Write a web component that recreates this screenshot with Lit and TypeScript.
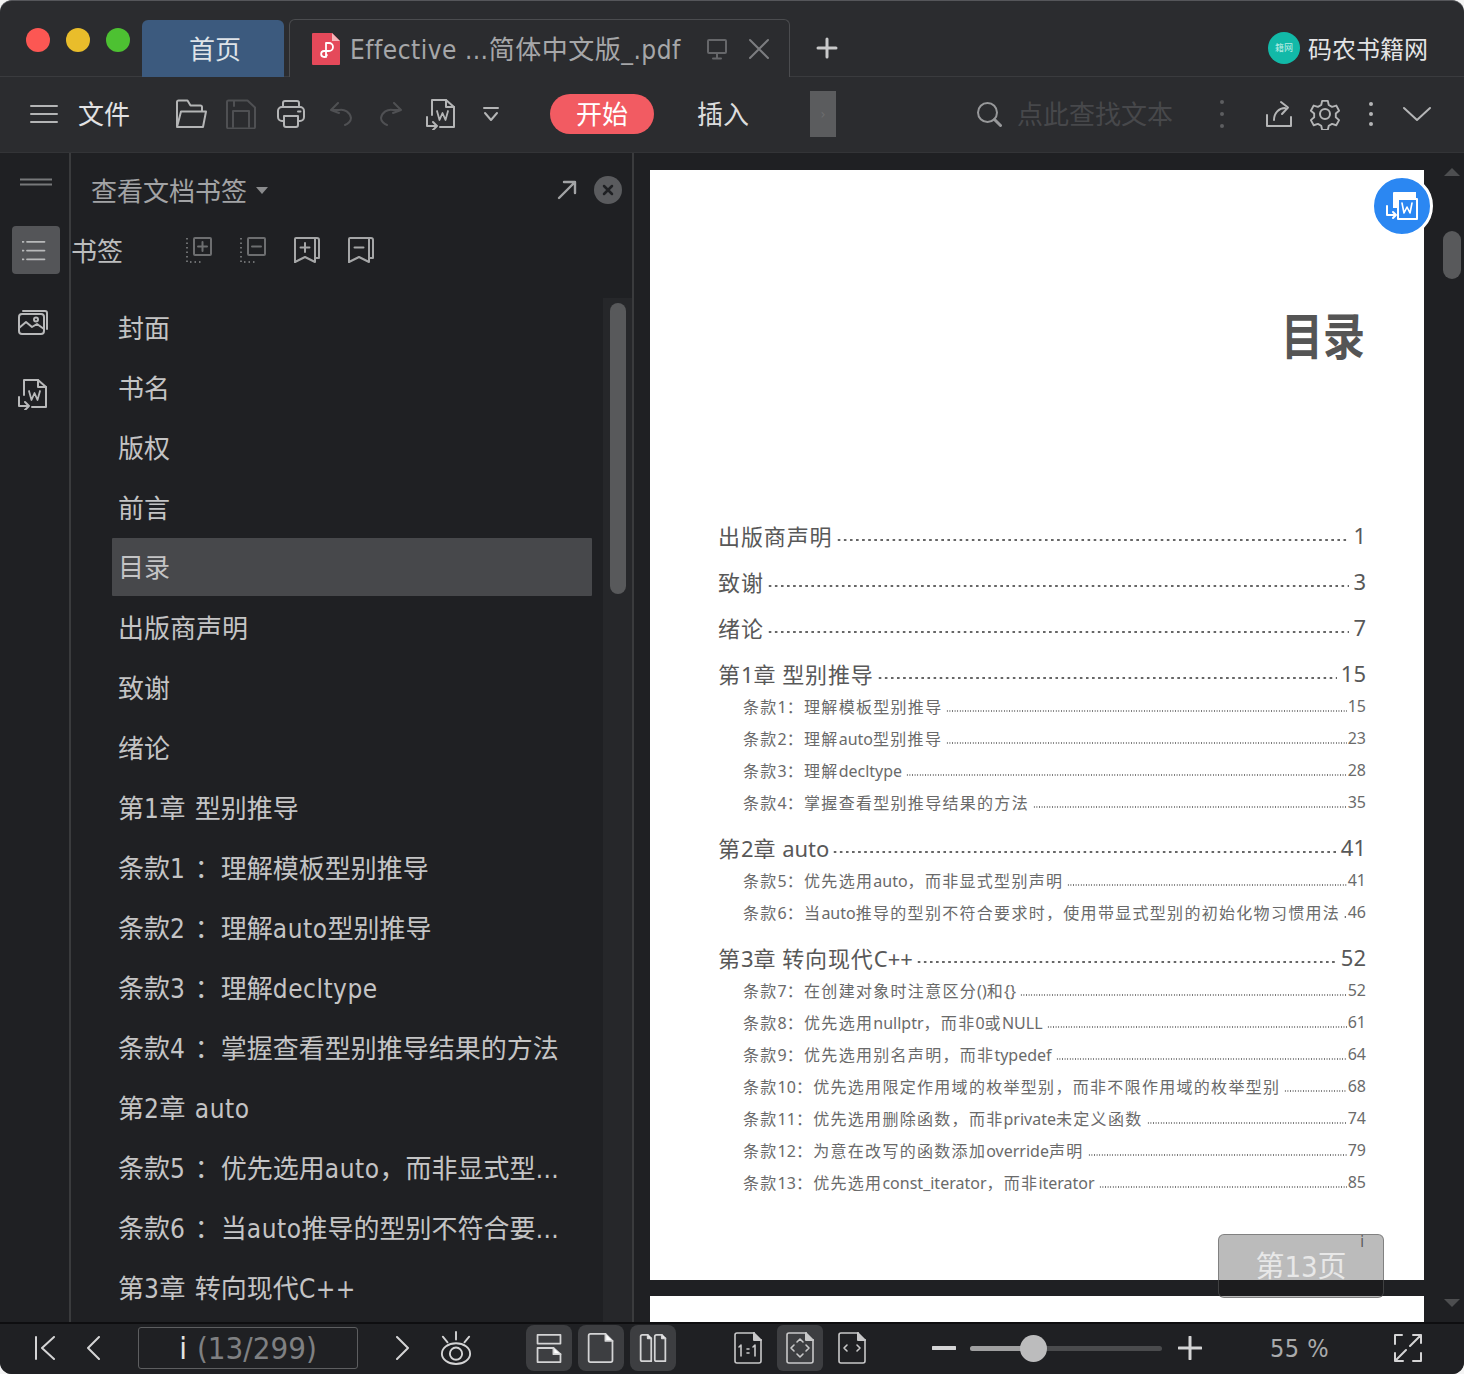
import { LitElement, html, css, svg } from "lit";
import { customElement } from "lit/decorators.js";

const ic = (w: number, h: number, vb: string, body: unknown, cls = "") =>
  html`<svg class=${cls} width=${w} height=${h} viewBox=${vb} fill="none" stroke="currentColor" stroke-width="2" stroke-linecap="round" stroke-linejoin="round">${body}</svg>`;

const wordDoc = svg`<path d="M7 17V2h14l8 7v20H15"/><path d="M21 2v7h8"/><path d="M12 13l2.500 9 3-7 3 7 2.500-9" stroke-width="1.800"/><path d="M2 19v9h10M8 24l4 4-4 4"/>`;

const bookmarks = [
  "封面", "书名", "版权", "前言", "目录", "出版商声明", "致谢", "绪论", "第1章 型别推导",
  "条款1 ：理解模板型别推导", "条款2 ：理解auto型别推导", "条款3 ：理解decltype",
  "条款4 ：掌握查看型别推导结果的方法", "第2章 auto",
  "条款5 ：优先选用auto，而非显式型别声明", "条款6 ：当auto推导的型别不符合要求时，使用带显式型别的初始化物习惯用法",
  "第3章 转向现代C++",
];

const toc: { t: string; p: string; sub?: boolean }[] = [
  { t: "出版商声明", p: "1" }, { t: "致谢", p: "3" }, { t: "绪论", p: "7" },
  { t: "第1章 型别推导", p: "15" },
  { t: "条款1：理解模板型别推导", p: "15", sub: true },
  { t: "条款2：理解auto型别推导", p: "23", sub: true },
  { t: "条款3：理解decltype", p: "28", sub: true },
  { t: "条款4：掌握查看型别推导结果的方法", p: "35", sub: true },
  { t: "第2章 auto", p: "41" },
  { t: "条款5：优先选用auto，而非显式型别声明", p: "41", sub: true },
  { t: "条款6：当auto推导的型别不符合要求时，使用带显式型别的初始化物习惯用法", p: "46", sub: true },
  { t: "第3章 转向现代C++", p: "52" },
  { t: "条款7：在创建对象时注意区分()和{}", p: "52", sub: true },
  { t: "条款8：优先选用nullptr，而非0或NULL", p: "61", sub: true },
  { t: "条款9：优先选用别名声明，而非typedef", p: "64", sub: true },
  { t: "条款10：优先选用限定作用域的枚举型别，而非不限作用域的枚举型别", p: "68", sub: true },
  { t: "条款11：优先选用删除函数，而非private未定义函数", p: "74", sub: true },
  { t: "条款12：为意在改写的函数添加override声明", p: "79", sub: true },
  { t: "条款13：优先选用const_iterator，而非iterator", p: "85", sub: true },
];

const runs = (t: string, cls = "lat") =>
  t.split(/([A-Za-z0-9_+(){} ]+)/).map((p, i) => (i % 2 ? html`<span class=${cls}>${p}</span>` : p));

@customElement("app-root")
export class AppRoot extends LitElement {
  static styles = css`
    :host { display: block; width: 1464px; height: 1374px; background: #f4f4f4;
      font-family: "DejaVu Sans Condensed", "Noto Sans CJK SC", sans-serif; font-stretch: condensed; font-weight: 400; }
    * { box-sizing: border-box; }
    svg { display: block; flex: none; }
    .win { width: 1464px; height: 1374px; border-radius: 12px; overflow: hidden; display: flex; flex-direction: column; background: #2b2c2f; position: relative; border-top: 1px solid #55565a; }
    .title { height: 76px; flex: none; display: flex; align-items: flex-end; border-bottom: 1px solid #3a3b3e; padding-left: 26px; }
    .lights { display: flex; gap: 16px; align-self: flex-start; margin-top: 27px; margin-right: 12px; }
    .lights i { width: 24px; height: 24px; border-radius: 50%; display: block; }
    .red { background: #fc5753; } .yel { background: #e9bd2b; } .grn { background: #4dc132; }
    .tab-home { width: 142px; height: 57px; background: #3c5a7e; border-radius: 6px 6px 0 0; color: #dfe3e8; font-size: 26px; display: flex; align-items: center; justify-content: center; margin-bottom: -1px; padding: 0 0 2px 4px; }
    .tab-doc { width: 501px; height: 58px; margin-left: 5px; margin-bottom: -1px; border: 1px solid #4b4c4f; border-bottom: none; border-radius: 6px 6px 0 0; background: #2b2c2f; display: flex; align-items: center; padding-left: 22px; color: #a6a7a9; font-size: 26px; white-space: nowrap; }
    .tab-doc .name { margin-left: 10px; width: 347px; letter-spacing: .5px; padding-bottom: 2px; }
    .tab-doc .mon { color: #66676a; margin-left: 9px; }
    .tab-doc .x { color: #7c7d80; margin-left: 20px; }
    .plus { color: #c9c9ca; margin-left: 26px; align-self: center; margin-top: 19px; }
    .grow { flex: 1; }
    .brand { align-self: center; margin-top: 18px; display: flex; align-items: center; color: #e4e4e5; font-size: 24px; margin-right: 36px; }
    .logo { width: 32px; height: 32px; border-radius: 50%; background: #12b9a8; color: #b9ece4; font-size: 9px; display: flex; align-items: center; justify-content: center; margin-right: 8px; white-space: nowrap; }
    .tools { height: 76px; flex: none; display: flex; align-items: center; padding: 0 24px 2px 30px; border-bottom: 1px solid #333437; color: #b4b5b6; }
    .tb { width: 50px; height: 50px; display: flex; align-items: center; justify-content: center; flex: none; }
    .dim { color: #4f5053; }
    .file { color: #e2e2e3; font-size: 26px; margin-left: 20px; margin-right: 36px; padding-bottom: 2px; }
    .pill { width: 104px; height: 40px; border-radius: 20px; background: #f25b62; color: #fff; font-size: 26px; display: flex; align-items: center; justify-content: center; margin-left: 34px; padding-bottom: 2px; }
    .ins { color: #dcdcdd; font-size: 26px; margin-left: 43px; padding-bottom: 2px; }
    .more { width: 26px; height: 46px; background: #5b5c5e; color: #6d6e70; margin-left: 61px; display: flex; align-items: center; justify-content: center; font-size: 14px; }
    .search { color: #97989a; }
    .ph { color: #47484b; font-size: 26px; margin-left: 15px; margin-right: 39px; padding-bottom: 2px; }
    .dots { width: 20px; display: flex; flex-direction: column; align-items: center; gap: 6px; }
    .dots i { width: 4px; height: 4px; border-radius: 50%; background: currentColor; display: block; }
    .d1 { color: #5d5e60; margin-right: 24px; gap: 8px; }
    .tb2 { width: 46px; display: flex; align-items: center; justify-content: center; }

    .main { flex: 1; display: flex; min-height: 0; background: #1f2023; }
    .rail { width: 71px; flex: none; border-right: 2px solid #3a3b3d; display: flex; flex-direction: column; align-items: center; color: #b8b9ba; padding-right: 3px; }
    .rail .bars { margin-top: 25px; margin-left: 6px; color: #77787a; }
    .rail .act { width: 48px; height: 48px; margin-left: 6px; background: #545558; border-radius: 4px; margin-top: 40px; padding-right: 4px; display: flex; align-items: center; justify-content: center; }
    .rail .img { margin-top: 36px; }
    .rail .wd { margin-top: 42px; }
    .panel { width: 563px; flex: none; border-right: 2px solid #3a3b3d; display: flex; flex-direction: column; position: relative; min-height: 0; overflow: hidden; }
    .ph1 { height: 74px; flex: none; display: flex; align-items: center; padding-left: 20px; color: #a2a3a5; font-size: 26px; }
    .ph1 span { padding-bottom: 2px; }
    .caret { width: 0; height: 0; border: 6px solid transparent; border-top: 7px solid #8a8b8d; border-bottom: none; margin-left: 9px; }
    .arrow { color: #a2a3a5; margin-right: 17px; }
    .close { width: 28px; height: 28px; border-radius: 50%; background: #5a5b5e; color: #1f2023; display: flex; align-items: center; justify-content: center; margin-right: 10px; }
    .ph2 { height: 46px; flex: none; display: flex; align-items: center; color: #bbbcbd; font-size: 26px; }
    .ph2 .lbl { width: 101px; padding-bottom: 2px; }
    .pi { width: 54px; display: flex; justify-content: center; color: #6d6e70; }
    .pi.on { color: #a5a6a7; }
    .listwrap { flex: 1; min-height: 0; display: flex; margin-top: 25px; }
    .list { width: 521px; padding-left: 41px; flex: none; overflow: hidden; }
    .item { height: 60px; width: 480px; display: flex; align-items: center; color: #c4c4c5; font-size: 26px; padding: 0 28px 4px 6px; }
    .item > span { overflow: hidden; white-space: nowrap; text-overflow: ellipsis; }
    .ll { letter-spacing: .5px; word-spacing: 1.500px; }
    .item.sel { background: #47484b; height: 58px; margin-bottom: 2px; border-radius: 1px; }
    .track { flex: 1; margin-left: 11px; background: #26272a; padding: 5px 7px 0 7px; }
    .thumb { width: 16px; height: 291px; border-radius: 8px; background: #58595b; }
    .viewer { flex: 1; min-width: 0; display: flex; position: relative; overflow: hidden; background: #1f2023; }
    .doc { width: 806px; flex: none; padding: 17px 16px 0 16px; display: flex; flex-direction: column; gap: 16px; }
    .page { height: 1110px; flex: none; background: #fff; padding: 0 58px 0 68px; color: #565656; display: flex; flex-direction: column; font-family: "Noto Sans", "Noto Sans CJK SC", sans-serif; font-stretch: normal; }
    .next { flex: 1; background: #fff; }
    .h1 { font-size: 42px; font-weight: 700; align-self: flex-end; color: #555; line-height: 60px; margin-top: 136px; margin-right: 1px; margin-bottom: 140px; transform: scaleY(1.18); }
    .r { display: flex; align-items: center; height: 32px; white-space: nowrap; font-size: 22px; letter-spacing: .9px; margin-top: 14px; font-weight: 400; color: #585858; padding-bottom: 2px; }
    .r.s { margin-top: 0; font-size: 16px; letter-spacing: 1.300px; padding: 0 0 0 25px; color: #6a6a6a; }
    .lat { letter-spacing: 0; }
    .lead { flex: 1; height: 4px; margin: 10px 4px 0 3px; min-width: 0; background-image: radial-gradient(circle, #666 1.200px, transparent 1.500px); background-size: 6.100px 4px; background-position: left; }
    .s .lead { height: 2px; margin: 10px 1px 0 4px; background-image: radial-gradient(circle, #777 .800px, transparent 1px); background-size: 2.600px 2px; }
    .num { letter-spacing: 0; }
    .sb { flex: 1; display: flex; flex-direction: column; align-items: center; padding-right: 1px; }
    .up { width: 0; height: 0; border: 8px solid transparent; border-bottom: 8px solid #4d4e50; border-top: none; margin-top: 15px; }
    .sthumb { width: 18px; height: 48px; border-radius: 9px; background: #58595b; margin-top: 55px; }
    .dn { width: 0; height: 0; border: 8px solid transparent; border-top: 8px solid #4d4e50; border-bottom: none; margin-top: auto; margin-bottom: 15px; }
    .fab { position: absolute; left: 737px; top: 22px; width: 62px; height: 62px; border-radius: 50%; background: #2b87f2; border: 3px solid #fff; display: flex; align-items: center; justify-content: center; color: #fff; }
    .badge { position: absolute; left: 584px; top: 1081px; width: 166px; height: 64px; border-radius: 6px; background: rgba(20,20,20,.29); border: 1px solid rgba(90,90,90,.6); color: #e8e8e8; font-size: 29px; display: flex; justify-content: center; padding-top: 10px; line-height: 44px; }
    .badge b { position: absolute; right: 19px; top: 0; font-size: 15px; line-height: 15px; font-weight: 400; color: #555; }

    .status { height: 52px; flex: none; background: #1f2023; border-top: 2px solid #0e0e10; padding-bottom: 2px; display: flex; align-items: center; color: #d4d4d5; }
    .st { width: 40px; display: flex; justify-content: center; flex: none; }
    .st1 { margin-left: 25px; } .st2 { margin-left: 8px; } .st3 { margin-left: 13px; }
    .pg { width: 220px; height: 42px; border: 1px solid #5d5e60; border-radius: 3px; margin-left: 25px; margin-right: 25px; display: flex; align-items: center; justify-content: center; font-size: 31px; color: #7f8082; white-space: nowrap; }
    .pg b { color: #e3e3e3; font-weight: 400; margin-right: 10px; }
    .mode { width: 46px; height: 46px; margin-left: 6px; border-radius: 8px; background: #3d3e41; display: flex; align-items: center; justify-content: center; flex: none; }
    .mode.first { margin-left: 50px; }
    .fit { width: 46px; height: 46px; margin-left: 6px; border-radius: 6px; display: flex; align-items: center; justify-content: center; flex: none; color: #c8c8c9; }
    .fit.first { margin-left: 49px; }
    .fit.on { background: #3d3e41; }
    .gapz { width: 57px; flex: none; }
    .slider { width: 192px; height: 5px; border-radius: 3px; background: #4a4b4d; margin: 0 16px 0 14px; position: relative; }
    .slider i { display: block; width: 63px; height: 5px; border-radius: 3px; background: #9f9fa0; }
    .slider b { position: absolute; left: 50px; top: -11px; width: 27px; height: 27px; border-radius: 50%; background: #bcbcbd; }
    .pct { color: #a9aaab; font-size: 25px; font-weight: 400; letter-spacing: .5px; margin-left: 68px; margin-right: 66px; white-space: nowrap; width: 58px; }
  `;

  render() {
    return html`<div class="win">
      <div class="title">
        <div class="lights"><i class="red"></i><i class="yel"></i><i class="grn"></i></div>
        <div class="tab-home">首页</div>
        <div class="tab-doc">
          ${ic(28, 32, "0 0 28 32", svg`<path d="M0 1a1 1 0 0 1 1-1h19l8 8v23a1 1 0 0 1-1 1H1a1 1 0 0 1-1-1z" fill="#e5495a" stroke="none"/><path d="M20 0l8 8h-8z" fill="#f5b5ba" stroke="none"/><path d="M14 24V10h3a4 4 0 0 1 0 8h-5a3 3 0 1 0 3 4" stroke="#fff" stroke-width="1.800"/>`)}
          <span class="name">Effective …简体中文版_.pdf</span>
          ${ic(22, 22, "0 0 22 22", svg`<rect x="2" y="2" width="18" height="13" rx="1"/><path d="M11 15v5M7 20.500h8"/>`, "mon")}
          ${ic(22, 22, "0 0 22 22", svg`<path d="M2 2l18 18M20 2L2 20"/>`, "x")}
        </div>
        ${ic(22, 22, "0 0 22 22", svg`<path d="M11 2v18M2 11h18" stroke-width="3"/>`, "plus")}
        <div class="grow"></div>
        <div class="brand"><div class="logo">籍网</div>码农书籍网</div>
      </div>

      <div class="tools">
        ${ic(28, 20, "0 0 28 20", svg`<path d="M1 2h26M1 10h26M1 18h26"/>`)}
        <span class="file">文件</span>
        <div class="tb">${ic(34, 30, "0 0 34 30", svg`<path d="M3 27V3a1.500 1.500 0 0 1 1.500-1.500h9l3 5h10a1.500 1.500 0 0 1 1.500 1.500v4"/><path d="M7 12.500h25l-3 15.500H3z"/>`)}</div>
        <div class="tb dim">${ic(32, 30, "0 0 32 30", svg`<path d="M2 28V3a1.500 1.500 0 0 1 1.500-1.500h19l7.500 7V28a1.500 1.500 0 0 1-1.500 1.500h-25A1.500 1.500 0 0 1 2 28z"/><path d="M8 28V12h16v16M9 2v5"/>`)}</div>
        <div class="tb">${ic(30, 30, "0 0 30 30", svg`<path d="M7 8V4a2 2 0 0 1 2-2h12a2 2 0 0 1 2 2v4"/><rect x="2" y="8" width="26" height="14" rx="4"/><path d="M8 17h14v9a2 2 0 0 1-2 2H10a2 2 0 0 1-2-2z" fill="#2b2c2f"/><path d="M22 12.500h2.500"/>`)}</div>
        <div class="tb dim">${ic(24, 24, "0 0 24 24", svg`<path d="M9 1L2 8l8 3M2 8h8a10 10 0 0 1 12 8c0 3-3 6-6 7"/>`)}</div>
        <div class="tb dim">${ic(24, 24, "0 0 24 24", svg`<path d="M15 1l7 7-8 3M22 8h-8A10 10 0 0 0 2 16c0 3 3 6 6 7"/>`)}</div>
        <div class="tb">${ic(32, 32, "0 0 32 32", wordDoc)}</div>
        <div class="tb">${ic(16, 16, "0 0 16 16", svg`<path d="M1 2h14M2 7l6 7 6-7"/>`)}</div>
        <div class="pill">开始</div>
        <span class="ins">插入</span>
        <div class="more">›</div>
        <div class="grow"></div>
        ${ic(26, 26, "0 0 26 26", svg`<circle cx="11.500" cy="11.500" r="9.500"/><path d="M18.500 18.500l6 6" stroke-width="3"/>`, "search")}
        <span class="ph">点此查找文本</span>
        <div class="dots d1"><i></i><i></i><i></i></div>
        <div class="tb2">${ic(28, 28, "0 0 28 28", svg`<path d="M2 15v11h24v-9"/><path d="M9 20c0-7 5-12 11-12M16 2l7 5.500-6 6.500"/>`)}</div>
        <div class="tb2">${ic(32, 32, "0 0 32 32", svg`<circle cx="16" cy="16" r="5"/><path d="M13 2h6l1 4.500 3.500 2 4.500-1.500 3 5.500-3.500 3v4l3.500 3-3 5.500-4.500-1.500-3.500 2-1 4.500h-6l-1-4.500-3.500-2-4.500 1.500-3-5.500 3.500-3v-4l-3.500-3 3-5.500 4.500 1.500 3.500-2z" transform="translate(0 0) scale(.94) translate(1 1)"/>`)}</div>
        <div class="tb2"><div class="dots"><i></i><i></i><i></i></div></div>
        <div class="tb2">${ic(28, 16, "0 0 28 16", svg`<path d="M1 2l13 12L27 2"/>`)}</div>
      </div>

      <div class="main">
        <div class="rail">
          ${ic(32, 8, "0 0 32 8", svg`<path d="M0 1.500h32M0 6.500h32" stroke-linecap="butt"/>`, "bars")}
          <div class="act">${ic(24, 21, "0 0 26 24", svg`<path d="M5 2h20M5 12h20M5 22h20"/><path d="M0 2h2M0 12h2M0 22h2" stroke-dasharray="1 1.500"/>`)}</div>
          ${ic(30, 26, "0 0 30 26", svg`<rect x="1" y="4" width="25" height="20" rx="3"/><path d="M5 1h22a2 2 0 0 1 2 2v16"/><path d="M1 18l7-6 6 5 5-3 7 5"/><circle cx="18" cy="9.500" r="2"/>`, "img")}
          ${ic(32, 32, "0 0 32 32", wordDoc, "wd")}
        </div>

        <div class="panel">
          <div class="ph1">
            <span>查看文档书签</span><div class="caret"></div><div class="grow"></div>
            ${ic(20, 20, "0 0 20 20", svg`<path d="M2 18L18 2M7 2h11v11" stroke-width="2.400"/>`, "arrow")}
            <div class="close">${ic(12, 12, "0 0 12 12", svg`<path d="M2 2l8 8M10 2l-8 8" stroke-width="2.500"/>`)}</div>
          </div>
          <div class="ph2">
            <span class="lbl">书签</span>
            <div class="pi">${ic(28, 28, "0 0 28 28", svg`<rect x="9" y="2" width="17" height="17" rx="1"/><path d="M17.500 6v9M13 10.500h9"/><path d="M2 2v24h16" stroke-dasharray="1.500 3" stroke-linecap="butt"/>`)}</div>
            <div class="pi">${ic(28, 28, "0 0 28 28", svg`<rect x="9" y="2" width="17" height="17" rx="1"/><path d="M13 10.500h9"/><path d="M2 2v24h16" stroke-dasharray="1.500 3" stroke-linecap="butt"/>`)}</div>
            <div class="pi on">${ic(28, 28, "0 0 28 28", svg`<path d="M2 26V3a1 1 0 0 1 1-1h21a2 2 0 0 1 2 2v18h-4"/><path d="M22 2v24l-10-5-10 5"/><path d="M12 7v9M7.500 11.500h9"/>`)}</div>
            <div class="pi on">${ic(28, 28, "0 0 28 28", svg`<path d="M2 26V3a1 1 0 0 1 1-1h21a2 2 0 0 1 2 2v18h-4"/><path d="M22 2v24l-10-5-10 5"/><path d="M7.500 11.500h9"/>`)}</div>
          </div>
          <div class="listwrap">
            <div class="list">
              ${bookmarks.map((b) => html`<div class="item ${b === "目录" ? "sel" : ""}"><span>${runs(b, "ll")}</span></div>`)}
            </div>
            <div class="track"><div class="thumb"></div></div>
          </div>
        </div>

        <div class="viewer">
          <div class="doc">
            <div class="page">
              <div class="h1">目录</div>
              ${toc.map((r) => html`<div class="r ${r.sub ? "s" : ""}"><span>${runs(r.t)}</span><i class="lead"></i><span class="num">${r.p}</span></div>`)}
            </div>
            <div class="next"></div>
          </div>
          <div class="sb"><div class="up"></div><div class="sthumb"></div><div class="dn"></div></div>
          <div class="fab">${ic(34, 32, "0 0 34 32", svg`<path d="M8 18V3a1 1 0 0 1 1-1h22v6H15v10" fill="#fff" stroke="none"/><rect x="13" y="9" width="19" height="20" fill="#2b87f2" stroke="#fff"/><path d="M17 13l2 10 3-6 3 6 2-10" stroke-width="1.600"/><path d="M2 16v9h9M8 22l3 3-3 3"/>`)}</div>
          <div class="badge">第13页<b>i</b></div>
        </div>
      </div>

      <div class="status">
        <div class="st st1">${ic(22, 24, "0 0 22 24", svg`<path d="M2 1v22M20 1L8 12l12 11"/>`)}</div>
        <div class="st st2">${ic(14, 24, "0 0 14 24", svg`<path d="M13 1L2 12l11 11"/>`)}</div>
        <div class="pg"><b>i</b>(13/299)</div>
        <div class="st">${ic(14, 24, "0 0 14 24", svg`<path d="M1 1l11 11L1 23"/>`)}</div>
        <div class="st st3">${ic(32, 36, "0 0 34 36", svg`<path d="M17 1v8M3 6l5 6M31 6l-5 6"/><ellipse cx="17" cy="24" rx="15" ry="11"/><circle cx="17" cy="24" r="6.500"/>`)}</div>
        <div class="mode first">${ic(28, 30, "0 0 30 34", svg`<path d="M2 2h26v10H2zM2 17h18l8 7v9H2z"/><path d="M20 17v7h8" fill="#fff"/>`)}</div>
        <div class="mode">${ic(28, 30, "0 0 30 34", svg`<path d="M3 1h17l8 8v22a2 2 0 0 1-2 2H3a2 2 0 0 1-2-2V3a2 2 0 0 1 2-2z"/><path d="M20 1v8h8" fill="#fff"/>`)}</div>
        <div class="mode">${ic(30, 30, "0 0 32 34", svg`<path d="M2 4a2 2 0 0 1 2-2h6l4 4v26H4a2 2 0 0 1-2-2zM18 4a2 2 0 0 1 2-2h6l4 4v26H20a2 2 0 0 1-2-2z"/><path d="M10 2v4h4M26 2v4h4" fill="#fff"/>`)}</div>
        <div class="fit first">${ic(28, 32, "0 0 28 32", svg`<path d="M3 1h17l7 7v21a2 2 0 0 1-2 2H3a2 2 0 0 1-2-2V3a2 2 0 0 1 2-2z" stroke-width="1.600"/><path d="M20 1v7h7" fill="currentColor"/><path d="M7 13v11M5 15l2-2M21 13v11M19 15l2-2M13 17h2M13 21h2" stroke-width="1.600"/>`)}</div>
        <div class="fit on">${ic(28, 32, "0 0 28 32", svg`<path d="M3 1h17l7 7v21a2 2 0 0 1-2 2H3a2 2 0 0 1-2-2V3a2 2 0 0 1 2-2z" stroke-width="1.600"/><path d="M20 1v7h7" fill="currentColor"/><path d="M11 10l3-3 3 3M11 22l3 3 3-3M8 13l-3 3 3 3M20 13l3 3-3 3" stroke-width="1.600"/>`)}</div>
        <div class="fit">${ic(28, 32, "0 0 28 32", svg`<path d="M3 1h17l7 7v21a2 2 0 0 1-2 2H3a2 2 0 0 1-2-2V3a2 2 0 0 1 2-2z" stroke-width="1.600"/><path d="M20 1v7h7" fill="currentColor"/><path d="M9 13l-3 3 3 3M19 13l3 3-3 3" stroke-width="1.600"/>`)}</div>
        <div class="gapz"></div>
        ${ic(24, 4, "0 0 24 4", svg`<path d="M1 2h22" stroke-width="4"/>`)}
        <div class="slider"><i></i><b></b></div>
        ${ic(24, 24, "0 0 24 24", svg`<path d="M12 1v22M1 12h22" stroke-width="3"/>`)}
        <span class="pct">55 %</span>
        ${ic(28, 28, "0 0 28 28", svg`<path d="M1 10V1h7M27 1L16 12M19 1h8v8M1 27l11-11M1 19v8h8M27 19v8h-8"/>`)}
      </div>
    </div>`;
  }
}
